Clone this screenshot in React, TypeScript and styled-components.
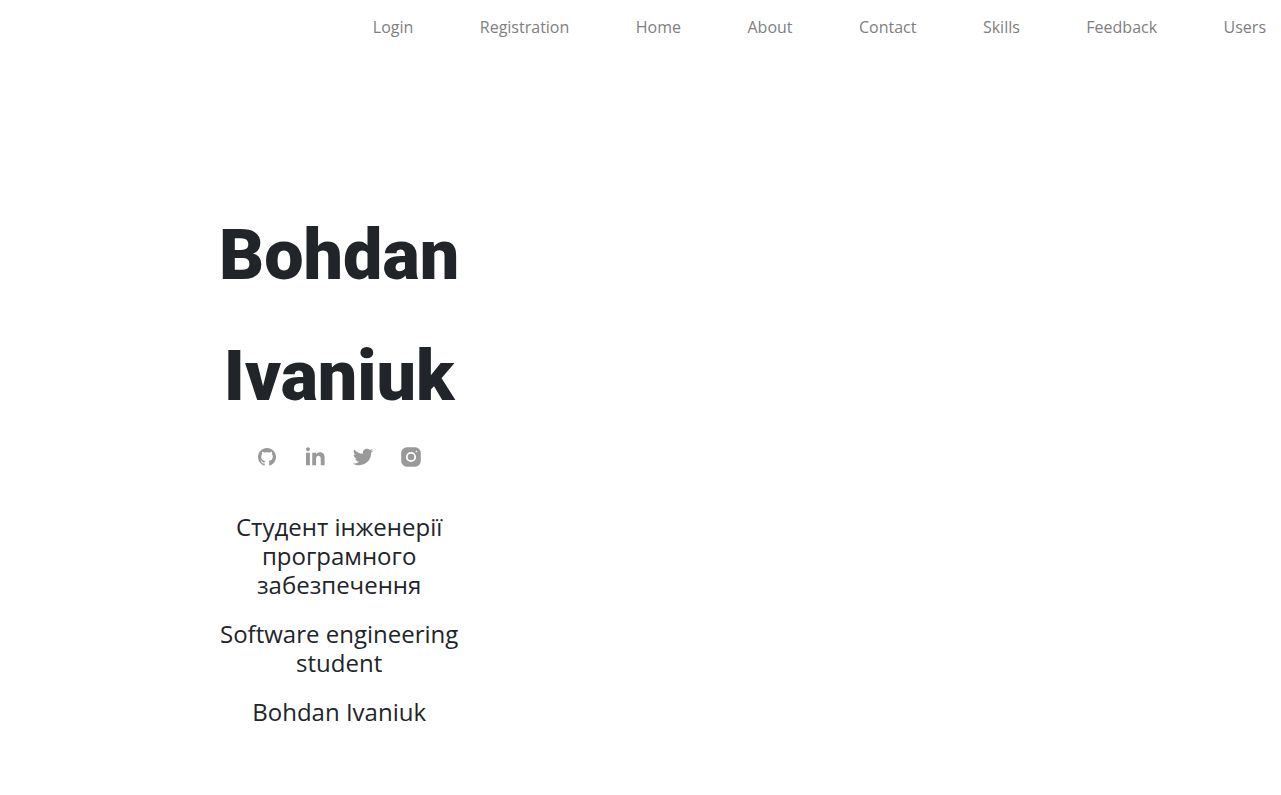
import React from 'react';
import styled, { createGlobalStyle } from 'styled-components';
import { LiaGithub } from 'react-icons/lia';
import { RiTwitterFill } from 'react-icons/ri';

const GlobalStyle = createGlobalStyle`
  *, *::before, *::after {
    box-sizing: border-box;
  }

  body {
    margin: 0;
    background: #fff;
    color: #212529;
    font-family: "Open Sans", sans-serif;
    font-size: 16px;
    line-height: 24px;
  }
`;

const Header = styled.header`
  padding: 15px;
`;

const Menu = styled.ul`
  display: flex;
  justify-content: space-between;
  width: 71.4%;
  margin: 0 0 0 auto;
  padding: 0;
  list-style: none;
`;

const MenuLink = styled.a`
  color: #808080;
  text-decoration: none;

  &:hover {
    color: #212529;
  }
`;

const Hero = styled.main`
  padding: 141px 0 60px 15%;
`;

const Profile = styled.section`
  display: flex;
  flex-direction: column;
  align-items: center;
  width: 27%;
  text-align: center;
`;

const Name = styled.h1`
  width: min-content;
  margin: 0;
  font-family: Roboto, sans-serif;
  font-size: 70px;
  font-weight: 900;
  line-height: 121px;
`;

const SocialList = styled.ul`
  display: flex;
  gap: 24px;
  margin: 8px 0 43px;
  padding: 0;
  list-style: none;
`;

const SocialLink = styled.a`
  display: block;
  height: 24px;
  color: #999;

  &:hover {
    color: #212529;
  }
`;

const Tagline = styled.h2`
  margin: 0 0 20px;
  font-size: 24px;
  font-weight: 500;
  line-height: 29px;
`;

interface IconProps {
  size: number;
}

function LinkedinIcon({ size }: IconProps) {
  return (
    <svg width={size} height={size} viewBox="-3.9 -2 31 31" fill="currentColor">
      <path d="M4.98 3.5c0 1.381-1.11 2.5-2.48 2.5s-2.48-1.119-2.48-2.5c0-1.38 1.11-2.5 2.48-2.5s2.48 1.12 2.48 2.5zm.02 4.5h-5v16h5v-16zm7.982 0h-4.968v16h4.969v-8.399c0-4.67 6.029-5.052 6.029 0v8.399h4.988v-10.131c0-7.88-8.922-7.593-11.018-3.714v-2.155z" />
    </svg>
  );
}

function InstagramIcon({ size }: IconProps) {
  return (
    <svg width={size} height={size} viewBox="0 0 24 24" fill="currentColor">
      <rect x="2.2" y="2.2" width="19.6" height="19.6" rx="5.8" />
      <circle cx="12" cy="12" r="4.2" fill="none" stroke="#fff" strokeWidth="1.8" />
      <circle cx="17.4" cy="6.5" r="0.8" fill="#fff" />
    </svg>
  );
}

const menu = ['Login', 'Registration', 'Home', 'About', 'Contact', 'Skills', 'Feedback', 'Users'];

const socials = [
  { label: 'GitHub', Icon: LiaGithub },
  { label: 'LinkedIn', Icon: LinkedinIcon },
  { label: 'Twitter', Icon: RiTwitterFill },
  { label: 'Instagram', Icon: InstagramIcon },
];

const taglines = [
  'Студент інженерії програмного забезпечення',
  'Software engineering student',
  'Bohdan Ivaniuk',
];

export default function App() {
  return (
    <>
      <GlobalStyle />
      <Header>
        <nav>
          <Menu>
            {menu.map((item) => (
              <li key={item}>
                <MenuLink href={`#${item.toLowerCase()}`}>{item}</MenuLink>
              </li>
            ))}
          </Menu>
        </nav>
      </Header>
      <Hero>
        <Profile>
          <Name>Bohdan Ivaniuk</Name>
          <SocialList>
            {socials.map(({ label, Icon }) => (
              <li key={label}>
                <SocialLink href={`#${label.toLowerCase()}`} aria-label={label}>
                  <Icon size={24} />
                </SocialLink>
              </li>
            ))}
          </SocialList>
          {taglines.map((line) => (
            <Tagline key={line}>{line}</Tagline>
          ))}
        </Profile>
      </Hero>
    </>
  );
}
